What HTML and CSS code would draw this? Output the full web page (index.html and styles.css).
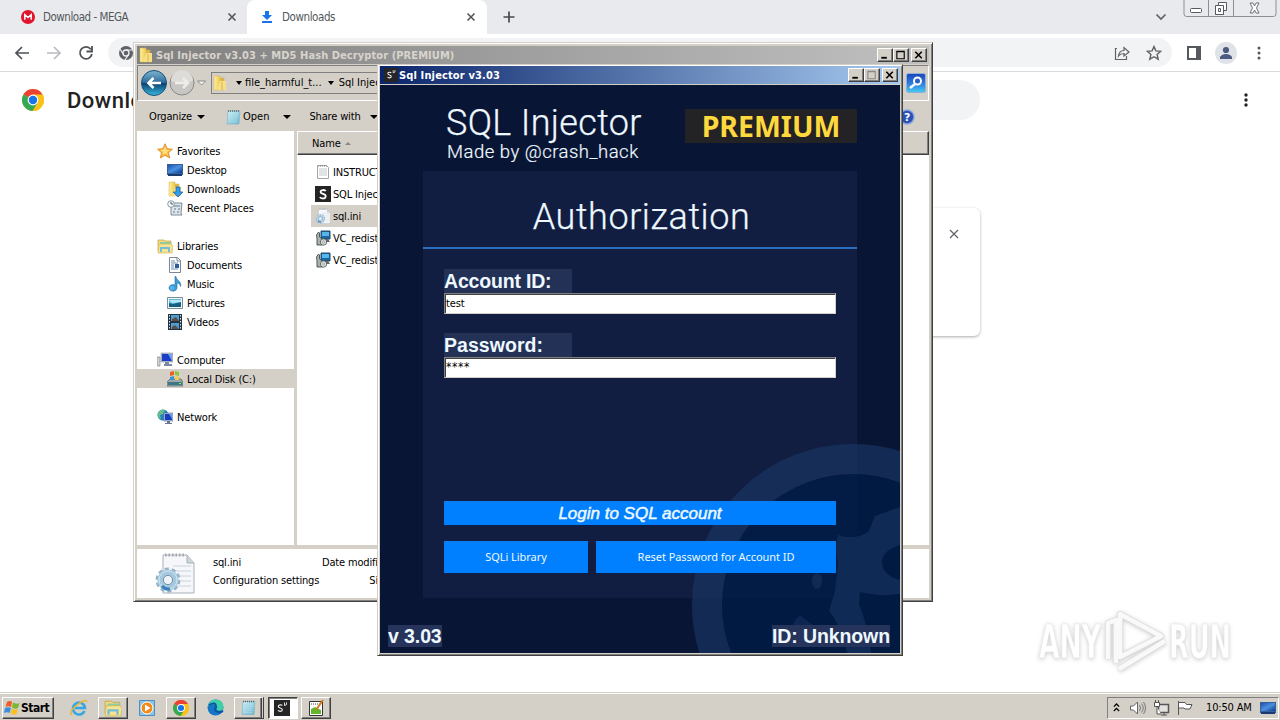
FILE: index.html
```html
<!DOCTYPE html>
<html lang="en">
<head>
<meta charset="utf-8">
<title>Downloads</title>
<link rel="stylesheet" href="styles.css">
</head>
<body>
<svg class="defs" width="0" height="0">
  <defs>
    <linearGradient id="gold" x1="0" x2="1" y2="0"><stop offset="0" stop-color="#fff0a0"/><stop offset=".5" stop-color="#f0cf5c"/><stop offset="1" stop-color="#d9ab32"/></linearGradient>
    <linearGradient id="glass" x1="0" x2="0" y2="1"><stop offset="0" stop-color="#7fb4cc"/><stop offset=".48" stop-color="#2c6c9c"/><stop offset=".52" stop-color="#0b4270"/><stop offset="1" stop-color="#36b8e0"/></linearGradient>
    <linearGradient id="screen" x1="0" x2="1" y2="1"><stop offset="0" stop-color="#1c50b0"/><stop offset=".5" stop-color="#4c90e0"/><stop offset="1" stop-color="#0a3c90"/></linearGradient>
    <linearGradient id="find" x1="0" x2="0" y2="1"><stop offset="0" stop-color="#1a44b8"/><stop offset=".5" stop-color="#2e78dc"/><stop offset="1" stop-color="#48ccf0"/></linearGradient>
    <linearGradient id="pad" x1="0" x2="1" y2="1"><stop offset="0" stop-color="#d8f4fa"/><stop offset="1" stop-color="#68b4cc"/></linearGradient>
  </defs>
  <symbol id="folder" viewBox="0 0 16 16"><path d="M2 1h6v2h4v12H5l-3 0z" fill="url(#gold)" stroke="#d0b04c" stroke-width=".5"/><path d="M8 3v9l4 3V4z" fill="#dcb44c"/><path d="M8 6h6v9H5z" fill="#f7df83"/><path d="M10 7v8" stroke="#d9b450"/></symbol>
  <symbol id="chrome" viewBox="0 0 24 24"><circle cx="12" cy="12" r="12" fill="#fbc116"/><path d="M12 12 1.600 6A12 12 0 0 1 22.400 6z" fill="#ea4335"/><path d="M12 12 1.600 6A12 12 0 0 0 11.500 24l5.600-9z" fill="#34a853"/><path d="M12 6h10.400A12 12 0 0 1 12 24l5.200-9z" fill="#fbc116"/><circle cx="12" cy="12" r="5.900" fill="#fff"/><circle cx="12" cy="12" r="4.600" fill="#1a73e8"/></symbol>
  <symbol id="notepad" viewBox="0 0 16 16"><path d="M3 2h12l-1 13H2z" fill="url(#pad)" stroke="#7fb4c6" stroke-width=".7"/><path d="M3 2h12" stroke="#566" stroke-width="1.500" stroke-dasharray="1 1"/><path d="M4 5h9M4 7h9M4 9h8M4 11h8M4 13h8" stroke="#a9dce8" stroke-width=".7"/></symbol>
  <symbol id="monitor" viewBox="0 0 16 16"><path d="M0 2h16v11H0z" fill="#3a5f95"/><path d="M1 3h14v8H1z" fill="url(#screen)"/><path d="M1 12h14v2H1z" fill="#183b70"/></symbol>
  <symbol id="text" viewBox="0 0 16 16"><path d="M2.500 1.500h9l2 2v11h-11z" fill="#fff" stroke="#a0a5aa"/><path d="M4 5h8M4 7h8M4 9h8M4 11h8" stroke="#b2b7bc" stroke-width=".8"/><path d="M3 2h9" stroke="#778" stroke-dasharray="1 1"/></symbol>
  <symbol id="sql" viewBox="0 0 16 16"><path d="M0 0h16v16H0z" fill="#242424"/><path d="M10.700 5.200C10 3.600 5.600 3.400 5.600 6 5.600 8.600 10.700 7.300 10.700 10.200 10.700 13.400 5.600 12.800 5 11" fill="none" stroke="#fff" stroke-width="1.800"/></symbol>
  <symbol id="sqls" viewBox="0 0 16 16"><path d="M0 0h16v16H0z" fill="#252525"/><path d="M8.300 5.500c-.7-.9-4-.9-4 .9 0 2 4 1.200 4 3.400 0 2-3.500 1.800-4.200.5" fill="none" stroke="#eee" stroke-width="1.200"/><path d="M10.500 2.500v3.200M12.500 2.300v2.400l-2 .8" fill="none" stroke="#eee" stroke-width=".9"/></symbol>
  <symbol id="ini" viewBox="0 0 40 42"><path d="M8 3h24l7 8v30H8z" fill="#f5f7fa" stroke="#a9b0b8"/><path d="M32 3v8h7" fill="#ccd4dc" stroke="#a9b0b8"/><path d="M10 3h21" stroke="#a2a8ae" stroke-width="3" stroke-dasharray="1.500 2"/><path d="M18 14h18M20 19h16M24 24h12M26 29h10M22 34h14" stroke="#c9d2dc"/><circle cx="13" cy="28" r="11" fill="none" stroke="#93b1c6" stroke-width="3" stroke-dasharray="4 2.900"/><circle cx="13" cy="28" r="7.600" fill="none" stroke="#a6c8df" stroke-width="6"/><circle cx="13" cy="28" r="9" fill="none" stroke="#d2e6f1" stroke-width="1"/><circle cx="13" cy="28" r="4.600" fill="#edf3f8" stroke="#6f8fa6"/><path d="M7 34a9 9 0 0 0 8 3" fill="none" stroke="#3980bd" stroke-width="3"/></symbol>
  <symbol id="setup" viewBox="0 0 16 16"><path d="M6 1h9v8H6z" fill="#1767a4" stroke="#274868"/><path d="M7 2h7v4H7z" fill="#58b5ec"/><path d="M9 9h4l2 3H8z" fill="#666"/><path d="M1.500 5l2-3 1 1v4l3 2v6H2V9z" fill="#aab4b0" stroke="#333b38" stroke-width=".8"/><circle cx="8.500" cy="12" r="3.200" fill="#d7ded9" stroke="#4d5654" stroke-width=".8"/><circle cx="8.500" cy="12" r="1" fill="#fff" stroke="#666" stroke-width=".5"/></symbol>
  <symbol id="star" viewBox="0 0 16 16"><path d="M8 .8l2.200 4.900 5.200.5-3.900 3.600 1.200 5.200L8 12.300 3.300 15l1.200-5.200L.6 6.200l5.200-.5z" fill="#ffb82f" stroke="#d98324" stroke-width=".8"/><path d="M8 3l1.300 3.800 3.700.2-3 2 .5 3L8 10.500 5.500 12 6 9 3 7l3.700-.2z" fill="#ffdf86"/></symbol>
  <symbol id="down" viewBox="0 0 16 16"><use href="#folder"/><path d="M9 6h4v5h3l-5 5-5-5h3z" fill="#349de8" stroke="#155a9e" stroke-width=".7"/></symbol>
  <symbol id="recent" viewBox="0 0 16 16"><path d="M4 3h11l-1 10 1 2H4z" fill="#dde5ea" stroke="#7d8c98"/><path d="M7 6h6M7 9h2M11 9h2M6 12h2M10 12h2" stroke="#5b7b91"/><circle cx="4" cy="4" r="3.300" fill="#f6fafb" stroke="#8a9aa2"/><path d="M4 2v2h2" stroke="#456" fill="none"/></symbol>
  <symbol id="library" viewBox="0 0 16 16"><path d="M1 2h6l1 1h6v10H1z" fill="#f5dc80" stroke="#c39e3f" stroke-width=".7"/><path d="M3 4h11v3H3z" fill="#8acd9e"/><path d="M2 6h12l2 2-1 7H1z" fill="#f7e392" stroke="#d3b75a" stroke-width=".7"/><path d="M4 14v-4h8v4" fill="none" stroke="#72bdd8" stroke-width="2"/></symbol>
  <symbol id="doc" viewBox="0 0 16 16"><path d="M2.500.5h8l3 3v12h-11z" fill="#fff" stroke="#7b8795"/><path d="M10 1v3h3" fill="none" stroke="#7b8795"/><path d="M4 4h4M4 6h7M4 8h3M4 10h3M4 12h7" stroke="#6c8daf"/><path d="M8 7h4v4H8z" fill="#285d9a"/></symbol>
  <symbol id="music" viewBox="0 0 16 16"><path d="M9 .5c0 4 6 4.500 4.500 10C13 7 10 7 10 7v5a4 3.300 0 1 1-2-3V.5z" fill="#3b9ed9" stroke="#1d6ca8" stroke-width=".6"/><circle cx="5" cy="12" r="2" fill="#58b4ea"/></symbol>
  <symbol id="picture" viewBox="0 0 16 16"><path d="M.5 2.500h15v11H.5z" fill="#f3f6f8" stroke="#7e8c99"/><path d="M2 4h12v8H2z" fill="#5cbce0"/><path d="M2 8l4 1 8-2v5H2z" fill="#155f82"/><path d="M2 5h12v2L5 8z" fill="#b7e7f5"/></symbol>
  <symbol id="video" viewBox="0 0 16 16"><path d="M1 0h14v16H1z" fill="#25313d"/><path d="M4 1h8v6H4zM4 9h8v6H4z" fill="#4f9ed2"/><path d="M2.500 1v15M13.500 1v15" stroke="#dce6ec" stroke-dasharray="1.500 1.500"/><path d="M5 5l4-2 3 4H5zM5 13l3-2 4 4H5z" fill="#5a5048"/></symbol>
  <symbol id="computer" viewBox="0 0 16 16"><path d="M4 1h12v9H4z" fill="#b5bdcb" stroke="#8993a6" stroke-width=".6"/><path d="M5 2h10v7H5z" fill="#183fc5"/><path d="M11 2h4v7z" fill="#76a1f4"/><path d="M8 10h4v2h3v2H7v-2h1z" fill="#7d89a2"/><path d="M0 5h3v9H0z" fill="#d0d4d8" stroke="#777" stroke-width=".6"/></symbol>
  <symbol id="disk" viewBox="0 0 16 16"><path d="M3 8h11l2 3v4H0v-4z" fill="#9aa7ad" stroke="#515e66" stroke-width=".7"/><path d="M1 11h14v3H1z" fill="#3e7784"/><path d="M12 12h2v1h-2z" fill="#64ff68"/><path d="M3 1l4-1v4l-4 1z" fill="#e8602c"/><path d="M8 0l4 1v4L8 4z" fill="#8bc641"/><path d="M3 6l4-1v4H3z" fill="#3d90db"/><path d="M8 5l4 1v3H8z" fill="#f9c840"/></symbol>
  <symbol id="network" viewBox="0 0 16 16"><circle cx="6" cy="6" r="5.500" fill="#2381bf"/><path d="M1 4c2-4 6-4 7-3L6 5 3 6l1 4c-3-1-4-4-3-6z" fill="#69bd8a"/><path d="M7 4h9v8H7z" fill="#b8c4dd" stroke="#6573a0" stroke-width=".7"/><path d="M8 5h7v6H8z" fill="#143dbf"/><path d="M12 5h3v5z" fill="#6d98ee"/><path d="M10 12h3v2h2v1H8v-1h2z" fill="#69778f"/></symbol>
  <symbol id="logo" viewBox="0 0 16 16"><path d="M3 2q3-2 5 0L7 7Q4 5.500 1.500 7z" fill="#ee5d24"/><path d="M9 2.500q3 2 6.500.5l-1.500 5Q11 9.500 8 7.500z" fill="#7db72f"/><path d="M1 8q3-1.500 6 0l-1.500 5Q3 11.500 0 13z" fill="#388fe0"/><path d="M8 8.500q3 2 6 .5l-1.500 5Q10 15.500 6.500 13.500z" fill="#fcbf24"/></symbol>
  <symbol id="min" viewBox="0 0 14 13"><path d="M3 9.500h6" stroke="#000" stroke-width="2"/></symbol>
  <symbol id="max" viewBox="0 0 14 13"><path d="M2.500 2.500h8v8h-8zM2 3h9" fill="none" stroke="currentColor" stroke-width="1.200"/></symbol>
  <symbol id="x" viewBox="0 0 14 13"><path d="M3 3l7 7M10 3l-7 7" stroke="#000" stroke-width="1.700"/></symbol>
</svg>

<main class="browser">
  <div class="tabs">
    <div class="tab"><svg class="fav" viewBox="0 0 14 14"><circle cx="7" cy="7" r="7" fill="#e2142d"/><path d="M3.800 9.700V4.700L7 7.600l3.200-2.900v5" fill="none" stroke="#fff" stroke-width="1.500"/></svg><span class="mega">Download - MEGA</span><svg class="tabx" viewBox="0 0 10 10"><path d="M1.500 1.500l7 7M8.500 1.500l-7 7" stroke="#555" stroke-width="1.600"/></svg></div>
    <div class="tab active"><svg class="fav" viewBox="0 0 14 14"><path d="M5 1h4v4h3l-5 5-5-5h3zM2 11h10v2H2z" fill="#1a73e8"/></svg><span>Downloads</span><svg class="tabx" viewBox="0 0 10 10"><path d="M1.500 1.500l7 7M8.500 1.500l-7 7" stroke="#555" stroke-width="1.600"/></svg></div>
    <svg class="plus" viewBox="0 0 12 12"><path d="M6 .5v11M.5 6h11" stroke="#45494d" stroke-width="1.700"/></svg>
    <svg class="chev" viewBox="0 0 12 8"><path d="M1.500 1.500L6 6l4.500-4.500" fill="none" stroke="#5f6368" stroke-width="1.700"/></svg>
    <svg class="caption" viewBox="0 0 94 17"><path d="M1 0v14q0 2.500 2.500 2.500h87Q93 16.500 93 14V0M25.500 0v16M50.500 0v16" fill="none" stroke="#8c9095"/><rect x="7.500" y="8.500" width="11" height="4" rx="1" fill="#fff" stroke="#555a60"/><path d="M35.500 2.500h8v8h-3v4h-8v-8h3z" fill="#fff" stroke="#555a60"/><path d="M32.500 5.500h8v9h-8zM35.500 8.500h2v3h-2z" fill="#fff" stroke="#555a60"/><path d="M67 3h3l1.500 3L73 3h3l-2.500 5 2.500 5h-3l-1.500-3L70 13h-3l2.500-5z" fill="#fff" stroke="#60646a" stroke-width=".9"/></svg>
  </div>
  <div class="toolbar">
    <svg class="ti" viewBox="0 0 16 16"><path d="M15 8H2M8 2L2 8l6 6" fill="none" stroke="#4d5156" stroke-width="1.700"/></svg>
    <svg class="ti" viewBox="0 0 16 16"><path d="M1 8h13M8 2l6 6-6 6" fill="none" stroke="#b9bbbe" stroke-width="1.700"/></svg>
    <svg class="ti" viewBox="0 0 16 16"><path d="M12.800 4.200A6 6 0 1 0 13.900 9M14 1v5.500H8.500" fill="none" stroke="#4d5156" stroke-width="1.800"/></svg>
    <div class="omni">
      <svg width="16" height="16" viewBox="0 0 16 16"><circle cx="8" cy="8" r="7" fill="#5f6368"/><circle cx="8" cy="8" r="3" fill="#5f6368" stroke="#f1f3f4" stroke-width="1.300"/><path d="M8 5h7M5.500 9.500L2 4M10.500 9.500L7 15" stroke="#f1f3f4" stroke-width="1.200"/></svg>
      <svg class="share" width="16" height="16" viewBox="0 0 16 16"><path d="M3 3.500H1.500v11h11V11M4.500 11c.5-4 2.500-5.500 5.500-5.500V2.500L15 7l-5 4V8.500C7.500 8.500 6 9 4.500 11z" fill="none" stroke="#5f6368" stroke-width="1.200"/></svg>
      <svg width="16" height="16" viewBox="0 0 16 16"><path d="M8 1.500l1.900 4.400 4.800.4-3.600 3.200 1.100 4.700L8 11.700l-4.200 2.500 1.100-4.700L1.300 6.300l4.800-.4z" fill="none" stroke="#5f6368" stroke-width="1.400"/></svg>
    </div>
    <svg class="panelicon" viewBox="0 0 14 14"><path d="M1 1h12v12H1z" fill="#fff" stroke="#55595e" stroke-width="2"/><path d="M9 0h5v14H9z" fill="#55595e"/></svg>
    <svg class="avatar" viewBox="0 0 22 22"><circle cx="11" cy="11" r="11" fill="#dfe2e7"/><circle cx="11" cy="8" r="3.100" fill="#4b5a80"/><path d="M5 17v-2q2-3 6-3t6 3v2z" fill="#4b5a80"/></svg>
    <svg class="dots" viewBox="0 0 4 14"><circle cx="2" cy="2" r="1.500"/><circle cx="2" cy="7" r="1.500"/><circle cx="2" cy="12" r="1.500"/></svg>
  </div>
  <header class="pagehead">
    <svg class="biglogo"><use href="#chrome"/></svg>
    <h1>Downloads</h1>
    <div class="search"></div>
    <svg class="dots pd" viewBox="0 0 4 14"><circle cx="2" cy="2" r="1.700"/><circle cx="2" cy="7" r="1.700"/><circle cx="2" cy="12" r="1.700"/></svg>
  </header>
  <section class="card"><svg viewBox="0 0 10 10"><path d="M1 1l8 8M9 1l-8 8" stroke="#5f6368" stroke-width="1.200"/></svg></section>
</main>

<div class="explorer">
  <div class="title grey"><svg class="i16"><use href="#folder"/></svg><b>Sql Injector v3.03 + MD5 Hash Decryptor (PREMIUM)</b>
    <div class="wb"><i><svg><use href="#min"/></svg></i><i><svg><use href="#max"/></svg></i><i class="gap"><svg><use href="#x"/></svg></i></div></div>
  <div class="address">
    <svg class="navb" viewBox="0 0 66 28"><circle cx="14" cy="14" r="12.500" fill="url(#glass)" stroke="#174f7c"/><path d="M21 14H9M13.500 9L8.500 14l5 5" fill="none" stroke="#fff" stroke-width="2.600"/><circle cx="42" cy="14" r="12" fill="#c8c6c2" stroke="#888"/><path d="M31 12a11 11 0 0 1 22 0q-11 4-22 0" fill="#dedcd9"/><path d="M35 14h13M43 9l5 5-5 5" fill="none" stroke="#eeedeb" stroke-width="2.600"/><path d="M57.500 12h8l-4 4z" fill="#f4f4f2" stroke="#777" stroke-width=".8"/></svg>
    <div class="crumb"><svg class="i16"><use href="#folder"/></svg><i class="arr"></i><span>file_harmful_t...</span><i class="arr"></i><span>Sql Injector</span></div>
    <svg class="searchb" viewBox="0 0 20 20"><rect x=".5" y=".5" width="19" height="19" rx="2" fill="url(#find)" stroke="#8eafd8"/><circle cx="11.500" cy="8" r="3.500" fill="#2b60c6" stroke="#fff" stroke-width="2"/><path d="M9 11l-5 4" stroke="#fff" stroke-width="2.500"/></svg>
  </div>
  <div class="cmds"><span class="org">Organize</span><i class="arr"></i><svg class="i16 np"><use href="#notepad"/></svg><span class="open">Open</span><i class="arr a2"></i><span class="sh">Share with</span><i class="arr a3"></i><svg class="help" viewBox="0 0 16 16"><circle cx="8" cy="8" r="7" fill="#2a50b8" stroke="#88a3df" stroke-width="1.500"/><text x="8" y="12">?</text></svg></div>
  <div class="panes">
    <nav>
      <p><svg class="i16"><use href="#star"/></svg><span>Favorites</span></p>
      <p class="sub"><svg class="i16"><use href="#monitor"/></svg><span>Desktop</span></p>
      <p class="sub"><svg class="i16"><use href="#down"/></svg><span>Downloads</span></p>
      <p class="sub"><svg class="i16"><use href="#recent"/></svg><span>Recent Places</span></p>
      <p class="sep"><svg class="i16"><use href="#library"/></svg><span>Libraries</span></p>
      <p class="sub"><svg class="i16"><use href="#doc"/></svg><span>Documents</span></p>
      <p class="sub"><svg class="i16"><use href="#music"/></svg><span>Music</span></p>
      <p class="sub"><svg class="i16"><use href="#picture"/></svg><span>Pictures</span></p>
      <p class="sub"><svg class="i16"><use href="#video"/></svg><span>Videos</span></p>
      <p class="sep"><svg class="i16"><use href="#computer"/></svg><span>Computer</span></p>
      <p class="sub sel"><svg class="i16"><use href="#disk"/></svg><span>Local Disk (C:)</span></p>
      <p class="sep"><svg class="i16"><use href="#network"/></svg><span>Network</span></p>
    </nav>
    <div class="list">
      <div class="lh"><span>Name</span><i class="up"></i></div>
      <p><svg class="i16"><use href="#text"/></svg><span>INSTRUCTION</span></p>
      <p><svg class="i16"><use href="#sql"/></svg><span>SQL Injector</span></p>
      <p class="sel"><svg class="i16"><use href="#ini"/></svg><span>sql.ini</span></p>
      <p><svg class="i16"><use href="#setup"/></svg><span>VC_redist</span></p>
      <p><svg class="i16"><use href="#setup"/></svg><span>VC_redist</span></p>
    </div>
  </div>
  <div class="details"><svg class="bigini"><use href="#ini"/></svg><div class="d1"><p>sql.ini</p><p>Configuration settings</p></div><div class="d2"><p>Date modified</p><p>Size</p></div></div>
</div>

<div class="injector">
  <div class="title blue"><svg class="i13"><use href="#sqls"/></svg><b>Sql Injector v3.03</b>
    <div class="wb"><i><svg><use href="#min"/></svg></i><i class="dis"><svg><use href="#max"/></svg></i><i class="gap"><svg><use href="#x"/></svg></i></div></div>
  <div class="app">
    <header class="brand"><div><h2>SQL Injector</h2><h3>Made by @crash_hack</h3></div><strong>PREMIUM</strong></header>
    <section class="auth">
      <h2>Authorization</h2>
      <div class="form">
        <label>Account ID:</label><div class="field">test</div>
        <label class="second">Password:</label><div class="field stars">****</div>
        <div class="btn login">Login to SQL account</div>
        <div class="row"><div class="btn lib">SQLi Library</div><div class="btn reset">Reset Password for Account ID</div></div>
      </div>
    </section>
    <footer><b>v 3.03</b><b class="uid">ID: Unknown</b></footer>
    <svg class="emblem" viewBox="0 0 520 568"><circle cx="473" cy="520" r="131" fill="#001c46" opacity=".8"/><circle cx="473" cy="520" r="146" fill="none" stroke="#17335f" stroke-width="30" opacity=".75"/><path d="M458 450q18 6 31-4l6-15 25-9v38q-15 4-18 15-1 15 18 20v14q-22 3-40-2l-1 12q9 22 12 49h-24q-6-28-18-42l6-20 3-28q-4-16 0-28z" fill="#17335f" opacity=".65"/><ellipse cx="437" cy="496" rx="5" ry="8" fill="#17335f" opacity=".6"/><path d="M412 543q4-13 9-12l14 11-20 2z" fill="#17335f" opacity=".5"/></svg>
  </div>
</div>

<svg class="watermark" viewBox="0 0 202 70"><g fill="#fff" stroke="#e6e6e6" stroke-width=".7"><text x="4" y="52" textLength="62" lengthAdjust="spacingAndGlyphs">ANY</text><text x="134" y="52" textLength="62" lengthAdjust="spacingAndGlyphs">RUN</text></g><g fill="none" stroke-linejoin="round"><path d="M73 53V17l8-3v43M85 8v43l41-21zM84 63l46-28" stroke="#ddd" stroke-width="6"/><path d="M73 53V17l8-3v43M85 8v43l41-21zM84 63l46-28" stroke="#f9f9f9" stroke-width="4.500"/></g></svg>

<footer class="taskbar">
  <div class="start raised"><svg width="16" height="16"><use href="#logo"/></svg><b>Start</b></div>
  <div class="slot"><svg width="18" height="18" viewBox="0 0 18 18"><path d="M14.500 12a6 6 0 1 1 .5-3H5" fill="none" stroke="#37a7e2" stroke-width="2.600"/><path d="M2 16Q-2 13 7 6T17 3" fill="none" stroke="#e9b638" stroke-width="1.500"/></svg></div>
  <div class="slot raised"><svg width="18" height="18"><use href="#library"/></svg></div>
  <div class="slot"><svg width="16" height="16" viewBox="0 0 16 16"><path d="M.5.500h15v15H.5z" fill="#8dc3e6" stroke="#4d8ebd"/><circle cx="8" cy="8" r="6" fill="#f18a19" stroke="#fff"/><path d="M6 4.500L11.500 8 6 11.500z" fill="#fff"/></svg></div>
  <div class="slot raised"><svg width="16" height="16"><use href="#chrome"/></svg></div>
  <div class="slot"><svg width="17" height="17" viewBox="0 0 17 17"><circle cx="8.500" cy="8.500" r="8" fill="#1676c5"/><path d="M1 7Q3 0 9 .5q8 1 7.500 8-1 4-6 3-2-1 0-3Q9 4 1 7z" fill="#3ed0a6"/><path d="M2 6q7-4 7 2-3 4 3 5 2 .5 4-1" fill="none" stroke="#0b56a4" stroke-width="2"/></svg></div>
  <div class="slot raised stack"><svg width="16" height="17"><use href="#notepad"/></svg></div>
  <div class="slot pressed"><svg width="16" height="16"><use href="#sqls"/></svg></div>
  <div class="slot raised"><svg width="18" height="18" viewBox="0 0 18 18"><path d="M2.500 2.500h13v14h-13z" fill="#fff" stroke="#333"/><path d="M4 10l4-2 6 3v4H4z" fill="#63b52e"/><path d="M4 5h10" stroke="#444" stroke-dasharray="1 1"/><path d="M16 1L9 11" stroke="#d27920" stroke-width="2"/></svg></div>
  <div class="tray"><svg class="tc" viewBox="0 0 8 10"><path d="M1 4l3-3 3 3M1 9l3-3 3 3" fill="none" stroke="#000" stroke-width="1.500"/></svg><svg class="snd" viewBox="0 0 17 14"><path d="M1.500 5h3l4-4v12l-4-4h-3z" fill="#fff" stroke="#666"/><path d="M10.500 4q2 3 0 6M12.500 2.500q3.500 4.500 0 9M14.500 1q4 6 0 12" fill="none" stroke="#777"/></svg><svg class="net" viewBox="0 0 17 16"><path d="M5.500 4.500h10v8h-10z" fill="#e4e2de" stroke="#555" stroke-width="1.500"/><path d="M8 15h6M11 13v2" stroke="#555"/><path d="M1.500 2.500h5v4h-5zM2.500 0v3M5.500 0v3M4 7v7h4" fill="#fff" stroke="#555"/></svg><svg class="flag" viewBox="0 0 16 14"><path d="M1.500 0v14M2 1.500h6l1.500 2H15l-2 4.500H8L7 7H2" fill="#fff" stroke="#555"/></svg><time>10:50 AM</time><svg class="desk"><use href="#monitor"/></svg></div>
</footer>
</body>
</html>
```
FILE: styles.css
```css
* { box-sizing: border-box; }
body { margin: 0; width: 1280px; height: 720px; overflow: hidden; position: relative; background: #fff; color: #000; font: 11px/14px "DejaVu Sans Condensed", "DejaVu Sans", sans-serif; letter-spacing: -.16px; display: flex; flex-direction: column; }
p, h1, h2, h3 { margin: 0; font-weight: 400; }
svg { flex: none; display: block; }
.defs { position: absolute; }
.i16 { width: 16px; height: 16px; }
.i13 { width: 14px; height: 14px; margin: 0 1px 0 0; }

.browser { flex: 1; display: flex; flex-direction: column; }
.tabs { height: 34px; background: #e8eaed; display: flex; align-items: center; color: #54585c; font-size: 11.500px; letter-spacing: -.42px; }
.mega { letter-spacing: -.48px; }
.tab { width: 247px; height: 34px; display: flex; align-items: center; padding: 0 10px 0 21px; }
.tab.active { width: 240px; background: #fff; border-radius: 8px 8px 0 0; padding: 0 11px 0 13px; }
.fav { width: 14px; height: 14px; margin-right: 8px; }
.tabx { width: 10px; height: 10px; margin-left: auto; }
.plus { width: 12px; height: 12px; margin-left: 16px; }
.chev { width: 12px; height: 8px; margin-left: auto; }
.caption { width: 94px; height: 17px; margin: 0 3px 0 16px; align-self: flex-start; }
.toolbar { height: 38px; display: flex; align-items: center; border-bottom: 1px solid #d9dbde; padding-left: 14px; }
.ti { width: 16px; height: 16px; margin-right: 16px; }
.omni { width: 1064px; height: 29px; border-radius: 15px; background: #f1f3f4; display: flex; align-items: center; padding: 0 10px; margin-left: -2px; }
.share { margin-left: auto; margin-right: 16px; }
.panelicon { width: 14px; height: 14px; margin-left: 15px; }
.avatar { width: 22px; height: 22px; margin: 0 20px 0 14px; }
.dots { width: 4px; height: 14px; fill: #55595e; }
.pagehead { height: 56px; display: flex; align-items: center; padding-left: 22px; }
.biglogo { width: 22px; height: 22px; }
.pagehead h1 { font: 500 22px/26px Roboto, sans-serif; letter-spacing: .5px; color: #222; margin: 2px 0 0 23px; width: 233px; }
.search { width: 680px; height: 40px; border-radius: 20px; background: #f1f3f4; }
.pd { margin-left: 264px; fill: #222; }
.card { width: 680px; height: 128px; margin: 80px 0 0 300px; border-radius: 6px; box-shadow: 0 1px 3px #0005; display: flex; justify-content: flex-end; padding: 21px 21px; }
.card svg { width: 10px; height: 10px; }

.explorer { position: absolute; left: 133px; top: 42px; width: 800px; height: 560px; background: #d4d0c8; border: 1px solid #d4d0c8; border-right-color: #404040; border-bottom-color: #404040; box-shadow: inset 1px 1px #fff, inset -1px -1px #808080; padding: 3px; display: flex; flex-direction: column; }
.title { height: 18px; display: flex; align-items: center; padding-left: 1px; flex: none; font-size: 11px; letter-spacing: .08px; }
.title b { margin: 1px 0 0 2px; white-space: nowrap; }
.grey { background: linear-gradient(90deg, #808080, #c0c0c0); color: #d8d4cc; }
.blue { background: linear-gradient(90deg, #0a246a, #a6caf0); color: #fff; padding-left: 4px; letter-spacing: .14px; }
.blue b { margin-left: 0; }
.wb { margin-left: auto; display: flex; padding-right: 2px; }
.wb i, .raised { background: #d4d0c8; border: 1px solid; border-color: #fff #404040 #404040 #fff; box-shadow: inset -1px -1px #808080; }
.wb i { width: 16px; height: 14px; color: #000; }
.wb svg { width: 14px; height: 12px; }
.wb .gap { margin-left: 2px; }
.wb .dis { color: #888; }
.address { height: 36px; margin-top: 1px; border: 1px solid; border-color: #808080 #fff #fff #808080; display: flex; align-items: center; padding: 0 2px; }
.navb { width: 66px; height: 28px; }
.crumb { margin-left: 5px; flex: 1; height: 22px; border: 1px solid #808080; display: flex; align-items: center; white-space: nowrap; letter-spacing: 0; }
.crumb .arr { margin: 0 3px 0 8px; }
.crumb span + .arr { margin: 0 5px 0 6px; }
.searchb { width: 20px; height: 20px; margin-left: 3px; }
.arr { border: 4px solid transparent; border-top-color: #000; border-bottom: 0; flex: none; }
.crumb .arr { border-width: 4px 3px 0; }
.cmds { height: 30px; display: flex; align-items: center; padding: 1px 0 0 12px; flex: none; white-space: nowrap; }
.org { width: 48px; }
.np { margin: 0 2px 0 20px; }
.open { letter-spacing: 0; }
.a2 { margin-left: 14px; }
.sh { margin-left: 18px; }
.a3 { margin-left: 9px; }
.help { width: 16px; height: 16px; margin-left: auto; margin-right: 14px; }
.help text { font: bold 11px "DejaVu Sans", sans-serif; fill: #fff; text-anchor: middle; }
.panes { height: 414px; display: flex; background: #fff; }
.panes span { padding-top: 2px; }
nav { width: 160px; border-right: 3px solid #d4d0c8; padding-top: 10px; }
nav p { height: 19px; display: flex; align-items: center; padding-left: 20px; gap: 4px; }
nav .sub { padding-left: 30px; }
nav .sep { margin-top: 19px; }
.sel { background: #d4d0c8; }
.list { flex: 1; }
.lh { height: 24px; background: #d4d0c8; border: 1px solid; border-color: #fff #404040 #404040 #fff; box-shadow: inset -1px -1px #808080; margin-bottom: 6px; padding-left: 14px; display: flex; align-items: center; }
.up { border: 3px solid transparent; border-bottom-color: #888; border-top: 0; margin-left: 4px; }
.list p { width: 400px; height: 22px; display: flex; align-items: center; gap: 2px; margin-left: 14px; padding-left: 4px; }
.list p span { padding-top: 1px; }
.details { margin-top: 4px; height: 49px; background: #fff; display: flex; }
.bigini { width: 40px; height: 42px; margin: 3px 0 0 18px; }
.d1 { margin: 5px 0 0 18px; width: 104px; white-space: nowrap; }
.d1 p, .d2 p { height: 18px; line-height: 18px; }
.d2 p { text-align: right; width: 73px; white-space: nowrap; }
.d2 p + p { padding-right: 1px; }
.d2 { margin-top: 5px; }

.injector { position: absolute; left: 377px; top: 64px; width: 526px; height: 592px; background: #d4d0c8; border: 1px solid #d4d0c8; border-right-color: #404040; border-bottom-color: #404040; box-shadow: inset 1px 1px #fff, inset -1px -1px #808080; padding: 1px 2px 2px 2px; display: flex; flex-direction: column; }
.app { margin-top: 1px; flex: 1; background: #091534; position: relative; overflow: hidden; display: flex; flex-direction: column; padding: 0 10px 6px 8px; color: #eef8ff; }
.brand { height: 86px; padding: 18px 33px 0 58px; display: flex; justify-content: space-between; }
.app h2 { font: 300 36px/40px Roboto, sans-serif; letter-spacing: .32px; white-space: nowrap; -webkit-text-stroke: .25px #eef8ff; }
.app h3 { font: 300 18.500px/20px Roboto, sans-serif; letter-spacing: .5px; margin: -1px 0 0 1px; -webkit-text-stroke: .2px #eef8ff; }
.brand strong { width: 172px; height: 34px; margin-top: 6px; background: #232225; color: #ffd83e; font: 700 28.500px/34px "Noto Sans", sans-serif; text-align: center; letter-spacing: 0; }
.auth { margin-left: 35px; width: 434px; height: 427px; background: #111e42; display: flex; flex-direction: column; }
.auth h2 { height: 78px; padding: 26px 0 0 3px; text-align: center; border-bottom: 2px solid #2a6dbb; letter-spacing: .55px; }
.form { padding: 20px 21px 0; display: flex; flex-direction: column; position: relative; z-index: 2; }
label, footer b { font: bold 19.500px/24px "Liberation Sans", Arial, sans-serif; letter-spacing: -.18px; }
label { width: 128px; height: 24px; background: #243156; }
.second { margin-top: 19px; letter-spacing: .05px; }
.field { height: 21px; background: #fff; color: #000; border: 1px solid; border-color: #808080 #d4d0c8 #d4d0c8 #808080; box-shadow: inset 1px 1px #404040; padding: 2px 1px; line-height: 15px; }
.stars { font-size: 12px; letter-spacing: .6px; }
.btn { background: #0080ff; display: flex; align-items: center; justify-content: center; }
.login { height: 24px; margin: 123px 0 16px; padding-top: 1px; font: italic 400 17px/23px "Liberation Sans", Arial, sans-serif; letter-spacing: 0; -webkit-text-stroke: .5px #eef8ff; }
.row { display: flex; gap: 8px; font: 11px/14px "Noto Sans", sans-serif; letter-spacing: -.05px; }
.row .btn { height: 32px; }
.lib { width: 144px; }
.reset { width: 240px; }
.app footer { margin-top: auto; display: flex; justify-content: space-between; position: relative; z-index: 2; }
.app footer b { background: #26335a; line-height: 22px; height: 22px; letter-spacing: -.1px; }
.emblem { position: absolute; inset: 0; width: 520px; height: 568px; z-index: 1; }

.watermark { position: absolute; left: 1035px; top: 606px; width: 202px; height: 70px; filter: drop-shadow(0 1px 2px #0003); }
.watermark text { font: bold 47px/50px "Liberation Sans Narrow", "DejaVu Sans Condensed", sans-serif; letter-spacing: 0; }

.taskbar { height: 28px; background: #d4d0c8; border-top: 1px solid #d4d0c8; box-shadow: inset 0 1px #fff; display: flex; align-items: center; padding: 2px 2px 0; position: relative; gap: 4px; }
.start { width: 52px; height: 22px; display: flex; align-items: center; padding-left: 1px; margin-right: 6px; }
.start b { font: bold 12px/16px "DejaVu Sans Condensed", sans-serif; letter-spacing: -.5px; margin-left: 1px; }
.slot { width: 30px; height: 22px; display: flex; align-items: center; justify-content: center; }
.stack { border-right: 3px double #404040; }
.pressed { background: #fff; border: 1px solid; border-color: #404040 #fff #fff #404040; box-shadow: inset 1px 1px #808080; margin-right: -1px; }
.pressed svg { margin-right: 3px; }
.tray { margin-left: auto; width: 172px; height: 22px; border: 1px solid; border-color: #808080 #fff #fff #808080; display: flex; align-items: center; padding-left: 5px; margin-right: -1px; }
.tc { width: 7px; height: 9px; }
.snd { width: 17px; height: 14px; margin-left: 9px; }
.net { width: 17px; height: 16px; margin-left: 7px; }
.flag { width: 16px; height: 14px; margin-left: 7px; }
.tray time { margin-left: 13px; white-space: nowrap; width: 51px; }
.desk { width: 16px; height: 16px; margin-left: 3px; }
```
